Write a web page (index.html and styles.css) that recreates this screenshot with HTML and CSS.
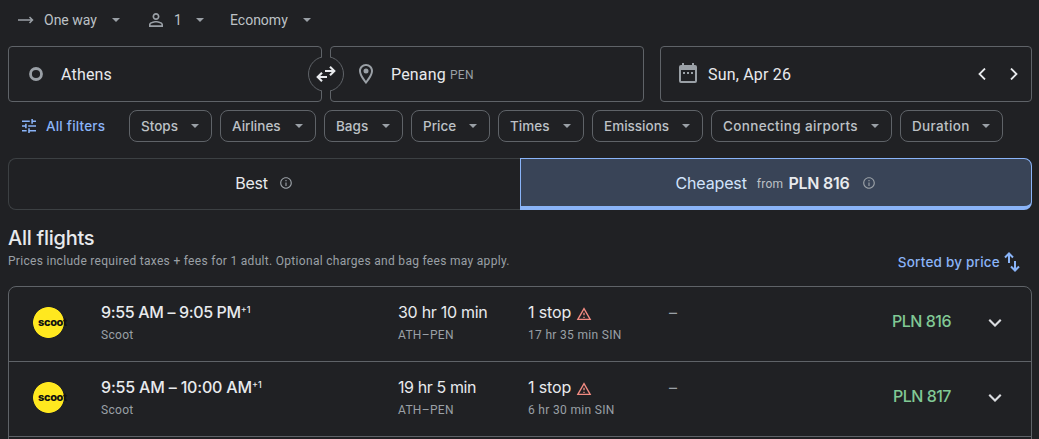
FILE: index.html
```
<!DOCTYPE html>
<html lang="en">
<head>
<meta charset="utf-8">
<title>Flights</title>
<link rel="stylesheet" href="styles.css">
</head>
<body>
<svg class="defs" aria-hidden="true">
  <symbol id="caret" viewBox="0 0 8 4"><path d="M0 0h8L4 4z"/></symbol>
  <symbol id="info" viewBox="0 0 24 24"><path d="M11 7h2v2h-2zm0 4h2v6h-2zm1-9C6.48 2 2 6.48 2 12s4.48 10 10 10 10-4.480 10-10S17.520 2 12 2zm0 18c-4.410 0-8-3.590-8-8s3.590-8 8-8 8 3.590 8 8-3.590 8-8 8z"/></symbol>
  <symbol id="warning" viewBox="0 0 24 24"><path d="M1 21h22L12 2 1 21zm3.470-2L12 5.990 19.530 19H4.470zM11 16h2v2h-2zm0-6h2v4h-2z"/></symbol>
  <symbol id="expand" viewBox="0 0 24 24"><path d="M18.500 9.500L12 16 5.500 9.500 7 8l5 5 5-5z"/></symbol>
</svg>
<main class="page">
  <div class="trip">
    <button class="trip-type"><svg class="arrow" viewBox="0 0 16 8"><path d="M0 4h14M11.500 1l3 3-3 3"/></svg><span>One way</span><svg class="caret"><use href="#caret"/></svg></button>
    <button class="passengers"><svg class="person" viewBox="4 4 16 16"><path d="M12 5.900a2.100 2.100 0 110 4.200 2.100 2.100 0 010-4.200m0 9c2.970 0 6.100 1.460 6.100 2.100v1.100H5.900V17c0-.64 3.130-2.100 6.100-2.100M12 4C9.790 4 8 5.790 8 8s1.790 4 4 4 4-1.790 4-4-1.790-4-4-4zm0 9c-2.670 0-8 1.340-8 4v3h16v-3c0-2.660-5.330-4-8-4z"/></svg><span>1</span><svg class="caret"><use href="#caret"/></svg></button>
    <button class="cabin"><span>Economy</span><svg class="caret"><use href="#caret"/></svg></button>
  </div>

  <div class="search">
    <div class="field from"><svg class="origin" viewBox="0 0 14 14"><circle cx="7" cy="7" r="5.500"/></svg><span>Athens</span></div>
    <button class="swap" aria-label="Swap"><svg viewBox="0 0 20 16"><path d="M9 5h9M14 .8L18.300 5 14 9.200M11 11H2M6 6.800L1.700 11 6 15.200"/></svg></button>
    <div class="field to"><svg class="pin" viewBox="5 2 14 20"><path d="M12 2C8.130 2 5 5.130 5 9c0 5.250 7 13 7 13s7-7.750 7-13c0-3.870-3.130-7-7-7zM7 9c0-2.760 2.240-5 5-5s5 2.240 5 5c0 2.880-2.880 7.190-5 9.880C9.920 16.210 7 11.850 7 9z"/><circle cx="12" cy="9" r="2.500"/></svg><span>Penang</span><small>PEN</small></div>
    <div class="field date"><svg class="calendar" viewBox="0 0 18 20"><path d="M2 2h1V0h2v2h8V0h2v2h1a2 2 0 012 2v14a2 2 0 01-2 2H2a2 2 0 01-2-2V4a2 2 0 012-2zm0 5v11h14V7zM4 9h2v2H4zm4 0h2v2H8zm4 0h2v2h-2z"/></svg><span>Sun, Apr 26</span><svg class="step" viewBox="0 0 8 12"><path d="M7 .5L1.500 6 7 11.500"/></svg><svg class="step" viewBox="0 0 8 12"><path d="M1 .5L6.500 6 1 11.500"/></svg></div>
  </div>

  <div class="filters">
    <button class="all"><svg viewBox="3 3 18 18"><path d="M3 17v2h6v-2H3zM3 5v2h10V5H3zm10 16v-2h8v-2h-8v-2h-2v6h2zM7 9v2H3v2h4v2h2V9H7zm14 4v-2H11v2h10zm-6-4h2V7h4V5h-4V3h-2v6z"/></svg><span>All filters</span></button>
    <button class="chip stops"><span>Stops</span><svg class="caret"><use href="#caret"/></svg></button>
    <button class="chip airlines"><span>Airlines</span><svg class="caret"><use href="#caret"/></svg></button>
    <button class="chip bags"><span>Bags</span><svg class="caret"><use href="#caret"/></svg></button>
    <button class="chip price-filter"><span>Price</span><svg class="caret"><use href="#caret"/></svg></button>
    <button class="chip times-filter"><span>Times</span><svg class="caret"><use href="#caret"/></svg></button>
    <button class="chip emissions"><span>Emissions</span><svg class="caret"><use href="#caret"/></svg></button>
    <button class="chip connecting"><span>Connecting airports</span><svg class="caret"><use href="#caret"/></svg></button>
    <button class="chip duration-filter"><span>Duration</span><svg class="caret"><use href="#caret"/></svg></button>
  </div>

  <div class="tabs">
    <div class="tab best"><span class="tab-name">Best</span><svg class="info"><use href="#info"/></svg></div>
    <div class="tab cheapest"><span class="tab-name">Cheapest</span><span class="tab-from">from</span><strong>PLN 816</strong><svg class="info"><use href="#info"/></svg></div>
  </div>

  <header class="heading">
    <div><h1>All flights</h1><p>Prices include required taxes + fees for 1 adult. Optional charges and bag fees may apply.</p></div>
    <button class="sort"><span>Sorted by price</span><svg viewBox="0 0 16 20"><path d="M5 11V2M1 5.500L5 1.500l4 4M11 9v9M7 14.500l4 4 4-4"/></svg></button>
  </header>

  <section class="list">
    <article class="flight">
      <div class="logo"><span>scoot</span></div>
      <div class="schedule"><b>9:55 AM – 9:05 PM<sup>+1</sup></b><small>Scoot</small></div>
      <div class="length"><span>30 hr 10 min</span><small>ATH–PEN</small></div>
      <div class="stop"><span>1 stop<svg class="warning"><use href="#warning"/></svg></span><small>17 hr 35 min SIN</small></div>
      <div class="co2">–</div>
      <div class="fare">PLN 816</div>
      <svg class="expand"><use href="#expand"/></svg>
    </article>
    <article class="flight">
      <div class="logo"><span>scoot</span></div>
      <div class="schedule late"><b>9:55 AM – 10:00 AM<sup>+1</sup></b><small>Scoot</small></div>
      <div class="length short"><span>19 hr 5 min</span><small>ATH–PEN</small></div>
      <div class="stop"><span>1 stop<svg class="warning"><use href="#warning"/></svg></span><small>6 hr 30 min SIN</small></div>
      <div class="co2">–</div>
      <div class="fare">PLN 817</div>
      <svg class="expand"><use href="#expand"/></svg>
    </article>
  </section>
</main>
</body>
</html>
```

FILE: styles.css
```
* { box-sizing: border-box; }
body { margin: 0; height: 439px; overflow: hidden; background: #202124; color: #e8eaed; font-family: Roboto, sans-serif; }
button { display: flex; align-items: center; padding: 0; border: 0; background: none; color: inherit; font: inherit; white-space: nowrap; }
svg { display: block; flex: none; fill: currentColor; }
.defs { position: absolute; width: 0; height: 0; }
.page { width: 1024px; margin-left: 8px; }
.caret { width: 8px; height: 4px; margin-left: auto; color: #9aa0a6; }

.trip { display: flex; height: 40px; padding-left: 10px; color: #bdc1c6; font-size: 14px; letter-spacing: .25px; }
.trip-type { width: 102px; }
.trip-type span { margin-left: 10px; }
.arrow { width: 16px; height: 8px; fill: none; stroke: #9aa0a6; stroke-width: 1.5; }
.passengers { width: 54px; margin-left: 30px; }
.passengers span { margin-left: 11px; }
.person { width: 14px; height: 14px; margin-left: -1px; color: #9aa0a6; }
.cabin { width: 81px; margin-left: 26px; }

.search { display: flex; margin-top: 6px; height: 56px; }
.field { display: flex; align-items: center; height: 56px; border: 1px solid #5f6368; border-radius: 4px; font-size: 16px; letter-spacing: .18px; }
.from { width: 314px; padding-left: 20px; }
.from span { margin-left: 18px; }
.origin { width: 14px; height: 14px; fill: none; stroke: #9aa0a6; stroke-width: 2.8; }
.swap { position: relative; z-index: 1; justify-content: center; width: 36px; height: 36px; margin: 10px -14px 0; border: 1px solid #5f6368; border-radius: 50%; background: #202124; }
/* opens the ring where it crosses the gap between the two fields */
.swap::before { content: ""; position: absolute; top: -2px; bottom: -2px; left: 13px; width: 8px; background: #202124; }
.swap svg { position: relative; width: 20px; height: 16px; fill: none; stroke: #e8eaed; stroke-width: 2.1; }
.to { width: 314px; padding-left: 28px; }
.to span { margin-left: 18px; }
.to small { margin: 2px 0 0 4px; color: #9aa0a6; font-size: 12px; letter-spacing: .3px; }
.pin { width: 14px; height: 20px; color: #9aa0a6; }
.date { width: 372px; margin-left: 16px; padding: 0 13px 0 18px; }
.date span { margin: 0 auto 0 11px; }
.calendar { width: 18px; height: 20px; margin-top: -3px; color: #9aa0a6; }
.step { width: 8px; height: 12px; margin-left: 24px; fill: none; stroke: #e8eaed; stroke-width: 1.8; }

.filters { display: flex; gap: 8px; height: 32px; margin-top: 8px; color: #bdc1c6; font: 500 13.5px Inter, sans-serif; letter-spacing: .15px; }
.all { width: 113px; padding-left: 14px; color: #8ab4f8; }
.all svg { width: 14px; height: 14px; }
.all span { margin-left: 10px; letter-spacing: .2px; }
.chip { height: 32px; padding: 0 12px 0 11px; border: 1px solid #5f6368; border-radius: 8px; }
.stops { width: 83px; }
.airlines { width: 96px; }
.bags, .price-filter { width: 79px; }
.times-filter { width: 86px; }
.emissions { width: 111px; letter-spacing: 0; }
.connecting { width: 181px; letter-spacing: .35px; }
.duration-filter { width: 103px; letter-spacing: .35px; }

.tabs { display: flex; height: 52px; margin-top: 16px; font-family: Inter, sans-serif; font-size: 16px; }
.tab { display: flex; align-items: center; justify-content: center; width: 512px; height: 52px; padding-bottom: 2px; border: 1px solid #3c4043; }
.best { border-right: 0; border-radius: 8px 0 0 8px; }
.best .tab-name { letter-spacing: -.2px; }
.best .info { margin-left: 11px; margin-right: 1px; }
.cheapest { padding: 1px 0 0; border-color: #8ab4f8; border-bottom-width: 4px; border-radius: 0 8px 8px 0; background: #394457; color: #d2e3fc; }
.cheapest .tab-name { letter-spacing: -.15px; }
.tab-from { margin: 2px 5px 0 10px; color: #bdc1c6; font: 12px Roboto, sans-serif; letter-spacing: .3px; }
.tab strong { color: #e8eaed; font-weight: 600; letter-spacing: -.25px; }
.info { width: 14px; height: 14px; margin-left: 13px; color: #9aa0a6; }

.heading { display: flex; justify-content: space-between; height: 76px; padding-top: 16px; }
h1 { margin: 0; font: 500 20px/24px Inter, sans-serif; letter-spacing: -.25px; }
.heading p { margin: 3px 0 0; color: #9aa0a6; font-size: 12px; line-height: 16px; letter-spacing: .3px; }
.sort { height: 24px; margin: 24px 12px 0 0; color: #8ab4f8; font: 500 13.5px Inter, sans-serif; letter-spacing: .22px; }
.sort svg { width: 16px; height: 20px; margin-left: 4px; fill: none; stroke: currentColor; stroke-width: 2; }

.list { height: 170px; border: 1px solid #5f6368; border-radius: 8px 8px 0 0; font: 16px Inter, sans-serif; }
.flight { display: grid; grid-template-columns: 92px 297px 130px 141px 184px 98px auto; height: 75px; border-bottom: 1px solid #5f6368; }
.flight small { display: block; margin-top: 4px; color: #9aa0a6; font: 12px/16px Roboto, sans-serif; letter-spacing: .32px; }
.logo { width: 35px; height: 31px; margin: 20px 0 0 24px; padding: 8px 0 0 5px; overflow: hidden; background: radial-gradient(circle at 15.500px 15.500px, #ffe81f 15px, transparent 15.800px); color: #111; font: 800 11px/14px Inter, sans-serif; letter-spacing: -.35px; }
.schedule, .length, .stop { padding-top: 14px; line-height: 22px; white-space: nowrap; }
.schedule b { display: block; height: 22px; font-weight: 500; letter-spacing: -.35px; }
.late b { letter-spacing: -.18px; }
.schedule sup { font-size: 9px; line-height: 0; letter-spacing: 0; vertical-align: 5px; }
.length > span, .stop > span { display: flex; height: 22px; }
.length > span { letter-spacing: -.28px; }
.short > span { letter-spacing: -.4px; }
.stop > span { letter-spacing: -.15px; }
.warning { width: 16px; height: 16px; margin: 5px 0 0 5px; color: #f28b82; }
.co2 { padding-top: 14px; color: #9aa0a6; line-height: 22px; }
.fare { justify-self: end; padding-top: 23px; color: #81c995; font-weight: 500; line-height: 22px; letter-spacing: -.5px; white-space: nowrap; }
.expand { width: 24px; height: 24px; margin: 24px 0 0 32px; color: #dadce0; }
```
